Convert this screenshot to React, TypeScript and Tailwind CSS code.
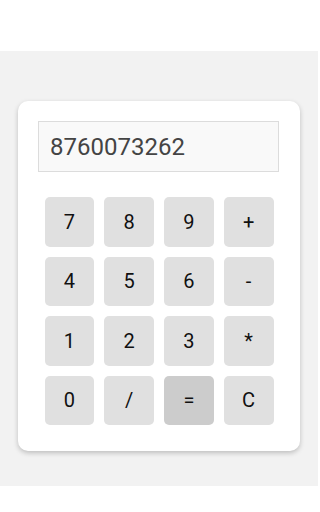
import React from "react";

const keys = ["7", "8", "9", "+", "4", "5", "6", "-", "1", "2", "3", "*", "0", "/", "=", "C"];

export default function App() {
  return (
    <div className="w-[318px] h-[512px] bg-white" style={{ fontFamily: "Roboto, 'Liberation Sans', sans-serif" }}>
      <div className="h-[51px]" />
      <div className="h-[435px] bg-[#f2f2f2] pt-[50px] flex flex-col items-center">
        <div className="w-[282px] bg-white rounded-[10px] shadow-[0_2px_5px_rgba(0,0,0,0.22)] pt-[20px] pb-[26px] px-[20px]">
          <div className="h-[51px] w-[241px] bg-[#f9f9f9] border border-[#dcdcdc] flex items-center pl-[11px] text-[24px] text-[#444]">
            8760073262
          </div>
          <div className="mt-[25px] w-[229px] mx-auto grid grid-cols-4 gap-[10px]">
            {keys.map((k) => (
              <div
                key={k}
                className={`h-[49.5px] rounded-[5px] flex items-center justify-center text-[20px] text-[#111] ${k === "=" ? "bg-[#cccccc]" : "bg-[#e0e0e0]"}`}
              >
                {k}
              </div>
            ))}
          </div>
        </div>
      </div>
    </div>
  );
}
